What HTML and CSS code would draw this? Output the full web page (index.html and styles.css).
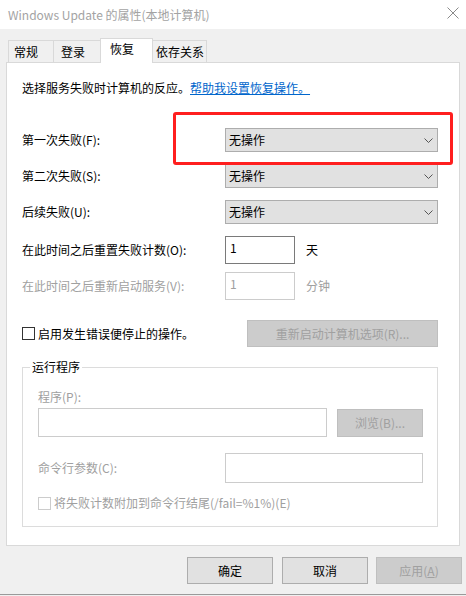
FILE: index.html
```html
<!DOCTYPE html>
<html lang="zh-CN">
<head>
<meta charset="utf-8">
<title>Windows Update 的属性(本地计算机)</title>
<link rel="stylesheet" href="styles.css">
</head>
<body>
<div class="window">
  <div class="titlebar">
    <span class="title">Windows Update 的属性(本地计算机)</span>
    <svg class="close" width="12" height="12" viewBox="0 0 12 12"><path d="M0.5 0.5 L11.5 11.5 M11.5 0.5 L0.5 11.5" stroke="#8a8a8a" stroke-width="1" fill="none"/></svg>
  </div>

  <div class="tabs">
    <div class="tab t1">常规</div>
    <div class="tab t2">登录</div>
    <div class="tab active">恢复</div>
    <div class="tab t4">依存关系</div>
  </div>

  <div class="panel">
    <p class="intro">选择服务失败时计算机的反应。<a class="link">帮助我设置恢复操作。</a></p>

    <div class="selects">
      <div class="row">
        <span class="label">第一次失败(F):</span>
        <div class="select"><span>无操作</span><svg width="9" height="5" viewBox="0 0 9 5"><path d="M0.5 0.5 L4.5 4.5 L8.5 0.5" stroke="#555" fill="none"/></svg></div>
      </div>
      <div class="row">
        <span class="label">第二次失败(S):</span>
        <div class="select"><span>无操作</span><svg width="9" height="5" viewBox="0 0 9 5"><path d="M0.5 0.5 L4.5 4.5 L8.5 0.5" stroke="#555" fill="none"/></svg></div>
      </div>
      <div class="row">
        <span class="label">后续失败(U):</span>
        <div class="select"><span>无操作</span><svg width="9" height="5" viewBox="0 0 9 5"><path d="M0.5 0.5 L4.5 4.5 L8.5 0.5" stroke="#555" fill="none"/></svg></div>
      </div>
    </div>

    <div class="inputs">
      <div class="irow">
        <span class="label">在此时间之后重置失败计数(O):</span>
        <div class="num">1</div>
        <span class="unit">天</span>
      </div>
      <div class="irow disabled">
        <span class="label">在此时间之后重新启动服务(V):</span>
        <div class="num">1</div>
        <span class="unit">分钟</span>
      </div>
    </div>

    <div class="checkrow">
      <span class="cb"></span>
      <span class="cblabel">启用发生错误便停止的操作。</span>
      <div class="btn btn-disabled restart">重新启动计算机选项(R)...</div>
    </div>

    <div class="group">
      <span class="legend">运行程序</span>
      <div class="glabel">程序(P):</div>
      <div class="prow">
        <div class="tbox prog"></div>
        <div class="btn btn-disabled browse">浏览(B)...</div>
      </div>
      <div class="crow">
        <span class="clabel">命令行参数(C):</span>
        <div class="tbox cmd"></div>
      </div>
      <div class="frow">
        <span class="cb cb-dis"></span>
        <span class="flabel">将失败计数附加到命令行结尾(/fail=%1%)(E)</span>
      </div>
    </div>
  </div>

  <div class="buttons">
    <div class="btn ok">确定</div>
    <div class="btn cancel">取消</div>
    <div class="btn btn-disabled apply">应用(<u>A</u>)</div>
  </div>

  <div class="annot"></div>
</div>
</body>
</html>
```

FILE: styles.css
```css
* { box-sizing: border-box; }
html, body { margin: 0; padding: 0; background: #f0f0f0; }
body {
  font-family: "Noto Sans CJK SC", "Noto Sans", sans-serif;
  font-size: 12px;
  line-height: 16px;
  color: #000;
}
.window {
  position: relative;
  width: 466px;
  height: 595px;
  background: #f0f0f0;
  border-bottom: 1px solid #9a9a9a;
  display: flex;
  flex-direction: column;
}
.titlebar {
  height: 29px;
  background: #fff;
  display: flex;
  align-items: center;
  justify-content: space-between;
  padding: 0 7px 0 8px;
}
.title { color: #a3a3a3; font-size: 12px; }
.close { margin-top: -3px; }

.tabs {
  display: flex;
  align-items: flex-end;
  height: 24px;
  margin: 9px 0 0 8px;
  position: relative;
  z-index: 1;
}
.tab {
  height: 22px;
  background: #f0f0f0;
  border: 1px solid #d9d9d9;
  border-bottom: none;
  padding-top: 3px;
  white-space: nowrap;
}
.t1 { width: 46px; padding-left: 5px; }
.t2 { width: 48px; padding-left: 7px; border-left: none; }
.tab.active {
  width: 53px;
  height: 25px;
  margin: 0 -2px -1px -2px;
  background: #fff;
  padding-left: 9px;
  padding-top: 2px;
  position: relative;
}
.t4 { width: 56px; padding-left: 5px; border-left: none; }

.panel {
  margin: 0 6px;
  height: 484px;
  background: #fff;
  border: 1px solid #d9d9d9;
  padding: 17px 21px 0 15px;
}
.intro { margin: 0; height: 16px; white-space: nowrap; }
.link { color: #0066cc; text-decoration: underline; }

.selects { margin-top: 32px; display: flex; flex-direction: column; gap: 12px; }
.row { display: flex; align-items: center; height: 24px; }
.label { width: 203px; white-space: nowrap; }
.select {
  width: 213px;
  height: 24px;
  background: #e1e1e1;
  border: 1px solid #adadad;
  display: flex;
  align-items: center;
  justify-content: space-between;
  padding: 0 4px 0 3px;
}
.select svg { margin-right: 0; }

.inputs { margin-top: 12px; display: flex; flex-direction: column; gap: 8px; }
.irow { display: flex; align-items: center; height: 28px; }
.num {
  width: 70px;
  height: 28px;
  border: 1px solid #7a7a7a;
  padding: 3px 0 0 4px;
  align-self: flex-start;
}
.unit { margin-left: 11px; }
.irow.disabled .label, .irow.disabled .unit { color: #a0a0a0; }
.irow.disabled .num { border-color: #cccccc; color: #a0a0a0; }

.checkrow { margin-top: 20px; display: flex; align-items: center; height: 27px; }
.cb {
  width: 13px;
  height: 13px;
  border: 1px solid #333;
  background: #fff;
  flex: none;
}
.cblabel { margin-left: 3px; white-space: nowrap; }
.btn {
  height: 27px;
  background: #e1e1e1;
  border: 1px solid #adadad;
  display: flex;
  align-items: center;
  justify-content: center;
  white-space: nowrap;
}
.btn-disabled { background: #cccccc; border-color: #bfbfbf; color: #a0a0a0; }
.restart { margin-left: auto; width: 191px; }

.group {
  position: relative;
  margin-top: 20px;
  height: 160px;
  border: 1px solid #dcdcdc;
  padding: 21px 14px 0 15px;
}
.legend {
  position: absolute;
  top: -9px;
  left: 7px;
  padding: 0 2px;
  background: #fff;
}
.glabel { color: #a0a0a0; height: 16px; }
.prow { margin-top: 3px; display: flex; align-items: center; height: 29px; }
.tbox { background: #fff; border: 1px solid #cccccc; }
.prog { width: 289px; height: 29px; }
.browse { margin-left: 10px; width: 86px; height: 28px; }
.crow { margin-top: 16px; display: flex; align-items: center; height: 30px; }
.clabel { width: 187px; color: #a0a0a0; white-space: nowrap; }
.cmd { width: 198px; height: 30px; }
.frow { margin-top: 12px; display: flex; align-items: center; height: 16px; }
.cb-dis { border-color: #cccccc; }
.flabel { margin-left: 3px; color: #a0a0a0; white-space: nowrap; }

.buttons {
  margin-top: 11px;
  display: flex;
  justify-content: flex-end;
  padding-right: 4px;
  gap: 8px;
}
.buttons .btn { width: 86px; }
.ok { margin-right: 1px; }
.apply u { text-decoration: underline; }

.annot {
  position: absolute;
  left: 173px;
  top: 112px;
  width: 280px;
  height: 53px;
  border: 3px solid #ff1f1f;
  border-radius: 3px;
}
```
